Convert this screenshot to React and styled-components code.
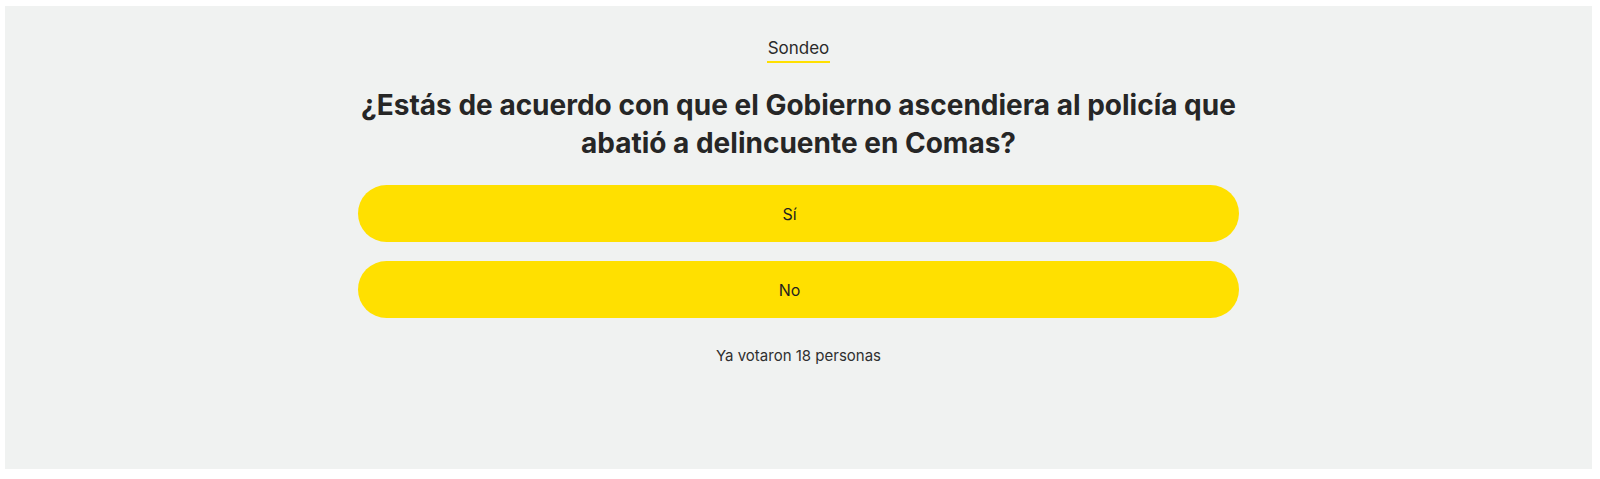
import React from 'react';
import styled, { createGlobalStyle } from 'styled-components';

const GlobalStyle = createGlobalStyle`
  body {
    margin: 0;
    background: #ffffff;
    font-family: Inter, "Noto Sans", sans-serif;
    color: #232323;
  }
`;

const Page = styled.div`
  padding: 6px 8px 10px 5px;
`;

const Panel = styled.section`
  background: #f0f2f1;
  height: 463px;
  box-sizing: border-box;
  padding-top: 32px;
  display: flex;
  flex-direction: column;
  align-items: center;
`;

const Label = styled.div`
  font-size: 17px;
  line-height: 20px;
  padding: 0 1px 3px;
  border-bottom: 2px solid #ffe000;
  color: #2a2a2a;
`;

const Question = styled.h2`
  margin: 23px 0 0;
  max-width: 890px;
  font-size: 28px;
  line-height: 38px;
  font-weight: 700;
  letter-spacing: 0;
  text-align: center;
  color: #262626;
`;

const Options = styled.div`
  margin-top: 23px;
  width: 881px;
  display: flex;
  flex-direction: column;
  gap: 19px;
`;

const Option = styled.button`
  height: 57px;
  border: none;
  border-radius: 29px;
  padding: 0 18px 0 0;
  background: #ffe000;
  font-family: Inter, "Noto Sans", sans-serif;
  font-size: 16px;
  color: #1f1f1f;
  cursor: pointer;
`;

const Votes = styled.p`
  margin: 28px 0 0;
  font-size: 15px;
  line-height: 20px;
  color: #2f2f2f;
`;

const options = ['Sí', 'No'];

export default function App() {
  return (
    <Page>
      <GlobalStyle />
      <Panel>
        <Label>Sondeo</Label>
        <Question>
          ¿Estás de acuerdo con que el Gobierno ascendiera al policía que abatió a delincuente en Comas?
        </Question>
        <Options>
          {options.map((o) => (
            <Option key={o}>{o}</Option>
          ))}
        </Options>
        <Votes>Ya votaron 18 personas</Votes>
      </Panel>
    </Page>
  );
}
